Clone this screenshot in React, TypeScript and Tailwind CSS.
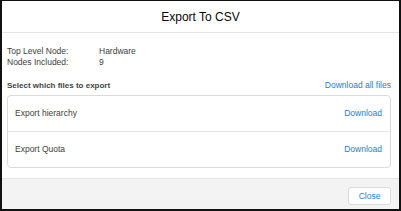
import React from 'react';

const files = [
  { id: 'hierarchy', label: 'Export hierarchy' },
  { id: 'quota', label: 'Export Quota' },
];

export default function App() {
  return (
    <div
      className="w-[401px] h-[211px] flex flex-col bg-white border-t border-l-2 border-r-2 border-b-2 border-[#111] text-[#3e3e3c] overflow-hidden"
      style={{ fontFamily: '"Liberation Sans", Arial, sans-serif' }}
    >
      {/* Header */}
      <div className="h-[32px] shrink-0 flex items-center justify-center border-b border-[#e5e5e5]">
        <h2 className="text-[12px] leading-none text-[#080707]">Export To CSV</h2>
      </div>

      {/* Body */}
      <div className="flex-1 flex flex-col pl-[5px] pr-[8px]">
        <div className="pt-[13px] text-[8.5px] leading-[11px]">
          <div className="flex">
            <span className="w-[92px]">Top Level Node:</span>
            <span>Hardware</span>
          </div>
          <div className="flex">
            <span className="w-[92px]">Nodes Included:</span>
            <span>9</span>
          </div>
        </div>

        <div className="mt-[12px] h-[11px] flex items-center justify-between">
          <span className="text-[8px] font-bold text-[#444]">Select which files to export</span>
          <button className="text-[8.5px] text-[#1a80e0]">Download all files</button>
        </div>

        <div className="mt-[4px] border border-[#dddbda] rounded-[4px] text-[8.5px]">
          {files.map((f, i) => (
            <div
              key={f.id}
              className={`h-[35px] flex items-center justify-between pl-[7px] pr-[8px] ${
                i < files.length - 1 ? 'box-content border-b border-[#e5e5e5]' : ''
              }`}
            >
              <span>{f.label}</span>
              <button className="text-[#1a80e0]">Download</button>
            </div>
          ))}
        </div>
      </div>

      {/* Footer */}
      <div className="h-[31px] shrink-0 bg-[#f3f3f3] border-t border-[#e5e5e5] flex items-start justify-end pt-[8px] pr-[8px]">
        <button className="h-[18px] w-[43px] bg-white border border-[#dddbda] rounded-[3px] text-[8.5px] text-[#1a80e0]">
          Close
        </button>
      </div>
    </div>
  );
}
